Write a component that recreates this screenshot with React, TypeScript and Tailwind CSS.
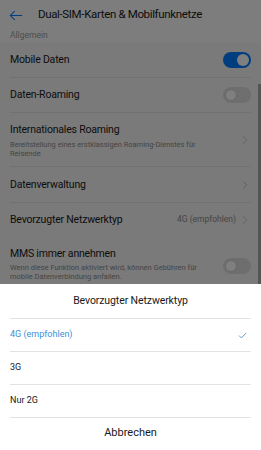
import { useState } from "react";

const ChevronRight = ({ className = "" }: { className?: string }) => (
  <svg viewBox="0 0 10 16" className={className} fill="none" stroke="currentColor" strokeWidth="1.3">
    <path d="M2 2l6 6-6 6" />
  </svg>
);

const Toggle = ({ on }: { on: boolean }) => (
  <div
    className={`w-[28px] h-[16px] rounded-full flex items-center px-[2px] ${
      on ? "bg-[#007dff] justify-end" : "bg-[#dcdcdc] justify-start"
    }`}
  >
    <div className={`w-[12px] h-[12px] rounded-full bg-white ${on ? "" : "border border-[#d0d0d0]"}`} />
  </div>
);

const Divider = () => <div className="h-px bg-[#e3e3e3] mx-[10px]" />;

const options = ["4G (empfohlen)", "3G", "Nur 2G"];

export default function App() {
  const [selected] = useState(0);

  return (
    <div
      className="relative w-[261px] h-[450px] overflow-hidden bg-[#f4f4f4] text-[#191919]"
      style={{ fontFamily: "Roboto, 'Noto Sans', sans-serif" }}
    >
      {/* header */}
      <div className="bg-[#fafafa]">
        <div className="h-[30px] flex items-center">
          <svg viewBox="0 0 16 12" className="w-[14px] h-[11px] ml-[9px] text-[#007dff]" fill="none" stroke="currentColor" strokeWidth="1.2">
            <path d="M15 6H1.5M6.5 1L1.5 6l5 5" />
          </svg>
          <span className="ml-[15px] text-[11.5px] tracking-[-0.35px]">Dual-SIM-Karten &amp; Mobilfunknetze</span>
        </div>
        <div className="h-[10px] flex items-center px-[10px] text-[8.5px] text-[#9a9a9a]">Allgemein</div>
        <div className="h-[3px]" />
      </div>

      {/* settings list */}
      <div className="bg-[#f4f4f4] text-[10.5px] tracking-[-0.2px]">
        <div className="h-[34px] flex items-center justify-between px-[10px]">
          <span>Mobile Daten</span>
          <Toggle on />
        </div>
        <Divider />
        <div className="h-[34px] flex items-center justify-between px-[10px]">
          <span>Daten-Roaming</span>
          <Toggle on={false} />
        </div>
        <Divider />
        <div className="h-[53px] flex items-center justify-between px-[10px]">
          <div className="flex flex-col">
            <span className="leading-[15px]">Internationales Roaming</span>
            <span className="text-[7.5px] leading-[9px] mt-[3px] text-[#8c8c8c] w-[200px] tracking-normal">
              Bereitstellung eines erstklassigen Roaming-Dienstes für Reisende
            </span>
          </div>
          <ChevronRight className="w-[6px] h-[10px] text-[#b5b5b5] mr-[3px]" />
        </div>
        <Divider />
        <div className="h-[35px] flex items-center justify-between px-[10px]">
          <span>Datenverwaltung</span>
          <ChevronRight className="w-[6px] h-[10px] text-[#b5b5b5] mr-[3px]" />
        </div>
        <Divider />
        <div className="h-[33px] flex items-center justify-between px-[10px]">
          <span>Bevorzugter Netzwerktyp</span>
          <div className="flex items-center gap-[6px] text-[#8c8c8c]">
            <span className="text-[8.5px] tracking-normal">4G (empfohlen)</span>
            <ChevronRight className="w-[6px] h-[10px] text-[#b5b5b5] mr-[3px]" />
          </div>
        </div>
        <div className="flex items-start justify-between px-[10px] pt-[10px]">
          <div className="flex flex-col">
            <span className="leading-[15px]">MMS immer annehmen</span>
            <span className="text-[7.5px] leading-[9px] mt-[2px] text-[#8c8c8c] w-[200px] tracking-normal">
              Wenn diese Funktion aktiviert wird, können Gebühren für mobile Datenverbindung anfallen.
            </span>
          </div>
          <div className="mt-[12px]">
            <Toggle on={false} />
          </div>
        </div>
      </div>

      {/* dim overlay */}
      <div className="absolute inset-0 bg-black/50" />
      <div className="absolute right-0 top-[84px] w-[3px] h-[200px] bg-black/30" />

      {/* bottom sheet */}
      <div className="absolute left-0 right-0 bottom-0 h-[166px] bg-white flex flex-col">
        <div className="h-[34px] flex items-center justify-center text-[10.5px] tracking-[-0.1px]">Bevorzugter Netzwerktyp</div>
        <Divider />
        {options.map((opt, i) => (
          <div key={opt}>
            <div className="h-[32px] flex items-center justify-between px-[10px]">
              <span className={`text-[9px] ${i === selected ? "text-[#3b8fd9]" : "text-[#191919]"}`}>{opt}</span>
              {i === selected && (
                <svg viewBox="0 0 12 10" className="w-[9px] h-[7px] mr-[4px] text-[#5a8fc0]" fill="none" stroke="currentColor" strokeWidth="1.3">
                  <path d="M1 5l3.5 3.5L11 1.5" />
                </svg>
              )}
            </div>
            <Divider />
          </div>
        ))}
        <div className="flex-1 flex items-center justify-center text-[11px] pb-[2px]">Abbrechen</div>
      </div>
    </div>
  );
}
